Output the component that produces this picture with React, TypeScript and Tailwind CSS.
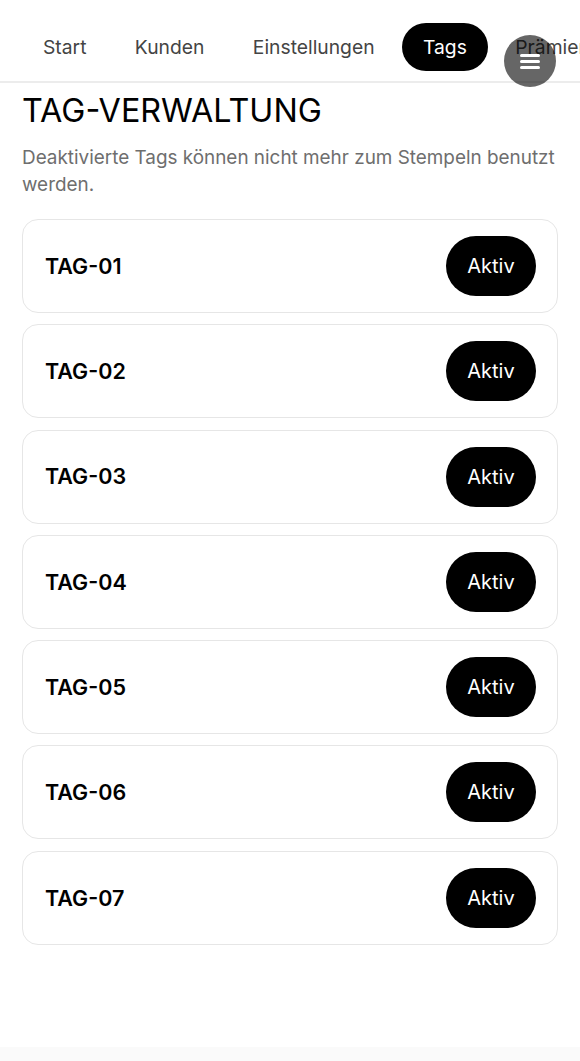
import React from "react";

const navItems = ["Start", "Kunden", "Einstellungen", "Tags", "Prämien"];
const tags = ["TAG-01", "TAG-02", "TAG-03", "TAG-04", "TAG-05", "TAG-06", "TAG-07"];

export default function App() {
  return (
    <div
      className="relative min-h-[1061px] w-full bg-white text-black overflow-hidden"
      style={{ fontFamily: "Inter, 'Noto Sans', sans-serif" }}
    >
      <nav className="flex items-center gap-[6.4px] pl-[22px] pt-[23px] pb-[10px] border-b-2 border-[#ececec] whitespace-nowrap overflow-hidden">
        {navItems.map((item) => (
          <span
            key={item}
            className={
              item === "Tags"
                ? "shrink-0 h-[48px] flex items-center px-[21px] rounded-full bg-black text-white text-[19.3px]"
                : "shrink-0 h-[48px] flex items-center px-[21px] rounded-full text-[#444444] text-[19.3px]"
            }
          >
            {item}
          </span>
        ))}
      </nav>

      <button className="absolute left-[504px] top-[35px] w-[52px] h-[52px] rounded-full bg-black/60 flex flex-col items-center justify-center gap-[3px]">
        <span className="block w-[20px] h-[3px] bg-white rounded-sm" />
        <span className="block w-[20px] h-[3px] bg-white rounded-sm" />
        <span className="block w-[20px] h-[3px] bg-white rounded-sm" />
      </button>

      <main className="px-[22px] pt-[9px]">
        <h1 className="text-[32.3px] leading-[38px] font-normal tracking-normal">TAG-VERWALTUNG</h1>
        <p className="mt-[13.5px] text-[18.9px] leading-[27px] text-[#6e6e6e]">
          Deaktivierte Tags können nicht mehr zum Stempeln benutzt werden.
        </p>

        <div className="mt-[21.5px] flex flex-col gap-[11.3px]">
          {tags.map((t) => (
            <div
              key={t}
              className="h-[94px] flex items-center justify-between pl-[22px] pr-[21px] rounded-[16px] border-[1.5px] border-[#e6e6e6]"
            >
              <span className="text-[21.5px] font-semibold">{t}</span>
              <span className="w-[90px] h-[60px] rounded-full bg-black text-white flex items-center justify-center text-[20px]">
                Aktiv
              </span>
            </div>
          ))}
        </div>
      </main>

      <div className="absolute left-0 right-0 bottom-0 h-[14px] bg-[#fafafa]" />
    </div>
  );
}
